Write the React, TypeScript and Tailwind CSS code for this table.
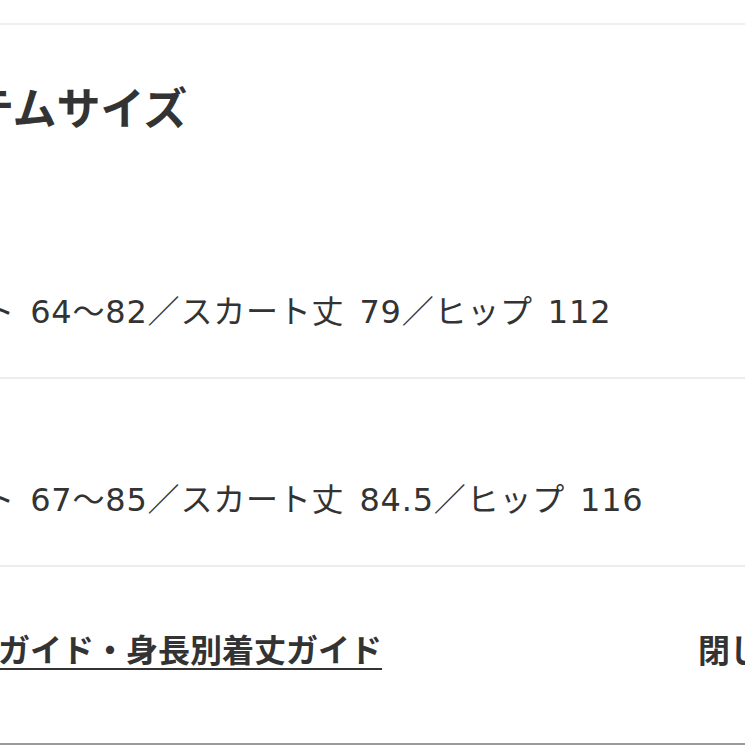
const rows = [
  { id: 's', text: 'ウエスト 64〜82／スカート丈 79／ヒップ 112' },
  { id: 'm', text: 'ウエスト 67〜85／スカート丈 84.5／ヒップ 116' },
]

export default function App() {
  return (
    <div className="h-[745px] w-[745px] overflow-hidden bg-white pt-[23px] font-['Noto_Sans_CJK_JP','Noto_Sans',sans-serif] text-[#333]">
      <div className="h-[2px] bg-[#efefef]" />

      {/* modal body, left part runs off the view */}
      <div className="-ml-[121px] w-[915px]">
        <h2 className="mt-[51px] pl-[6px] text-[44px] font-bold leading-[60px]">
          アイテムサイズ
        </h2>

        {rows.map((row, i) => (
          <div key={row.id}>
            <div
              className={`${i === 0 ? 'mt-[152px]' : 'mt-[97px]'} pl-[5px] font-['DejaVu_Sans','Noto_Sans_CJK_JP',sans-serif] text-[32px] leading-[48px] tracking-[0.8px] [word-spacing:4px]`}
            >
              {row.text}
            </div>
            <div className="mt-[41px] h-[2px] bg-[#ececec]" />
          </div>
        ))}

        {/* footer */}
        <div className="mt-[57px] flex items-center justify-between pl-[24px] text-[32px] leading-[48px]">
          <a className="font-bold underline decoration-2 underline-offset-[6px]">
            サイズガイド・身長別着丈ガイド
          </a>
          <button className="font-bold">閉じる</button>
        </div>
      </div>

      <div className="mt-[71px] h-[2px] bg-[#9a9a9a]" />
    </div>
  )
}
